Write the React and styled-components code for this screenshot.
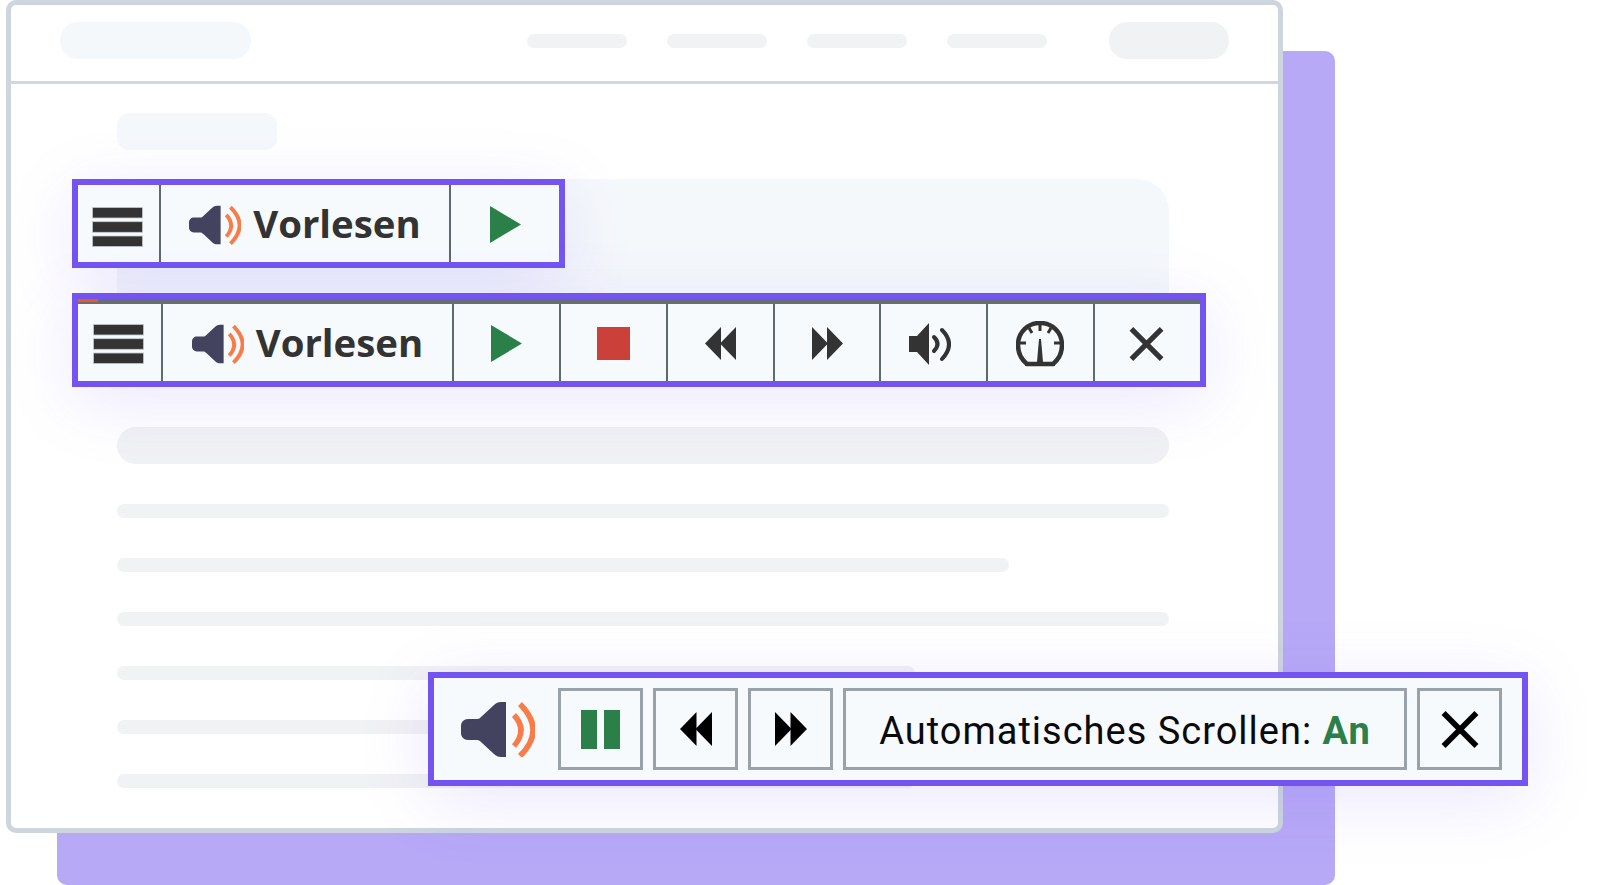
import React from "react";
import styled, { createGlobalStyle } from "styled-components";

const GlobalStyle = createGlobalStyle`
  html, body {
    margin: 0;
    padding: 0;
    background: #fff;
    overflow: hidden;
  }
  * { box-sizing: border-box; }
`;

const DARK = "#333333";
const GREEN = "#2a8048";

const Stage = styled.div`
  position: relative;
  width: 1600px;
  height: 885px;
  padding-left: 6px;
  overflow: hidden;
  background: #fff;
`;

const Backdrop = styled.div`
  position: absolute;
  left: 57px;
  top: 51px;
  width: 1278px;
  height: 834px;
  border-radius: 10px;
  background: #b7a9f6;
`;

const Browser = styled.div`
  position: relative;
  width: 1277px;
  height: 833px;
  border: 5px solid #cdd5df;
  border-radius: 10px;
  background: #fff;
  overflow: hidden;
`;

const Header = styled.header`
  display: flex;
  align-items: center;
  height: 79px;
  padding: 18px 49px 24px;
  border-bottom: 3px solid #d0d7e1;
`;

const Logo = styled.div`
  width: 191px;
  height: 37px;
  border-radius: 18px;
  background: #f5f8fb;
`;

const Nav = styled.nav`
  display: flex;
  gap: 40px;
  margin: 1px 62px 0 auto;
`;

const NavItem = styled.div`
  width: 100px;
  height: 14px;
  border-radius: 7px;
  background: #f1f2f4;
`;

const CTA = styled.div`
  width: 120px;
  height: 37px;
  border-radius: 18px;
  background: #f1f2f4;
`;

const Content = styled.main`
  display: flex;
  flex-direction: column;
  align-items: flex-start;
  padding: 29px 109px 0 106px;
`;

const Tag = styled.div`
  width: 160px;
  height: 37px;
  border-radius: 12px;
  background: #f5f8fb;
`;

const Hero = styled.div`
  width: 100%;
  height: 150px;
  margin-top: 29px;
  border-radius: 32px 32px 0 0;
  background: #f5f8fb;
`;

const Bar = styled.div`
  width: 100%;
  height: 37px;
  margin-top: 98px;
  margin-bottom: 40px;
  border-radius: 19px;
  background: #f1f2f4;
`;

const TextLine = styled.div`
  width: ${(p) => p.$width}px;
  height: 14px;
  margin-bottom: 40px;
  border-radius: 7px;
  background: #f1f2f4;
`;

const Toolbar = styled.div`
  position: absolute;
  left: ${(p) => p.$left}px;
  top: ${(p) => p.$top}px;
  width: ${(p) => p.$width}px;
  height: ${(p) => p.$height}px;
  border: 6px solid #7354f1;
  background: #f7fafd;
  box-shadow: 0 14px 70px rgba(115, 84, 241, 0.14);
`;

const Progress = styled.div`
  height: 5px;
  background: #667074;
`;

const ProgressFill = styled.div`
  width: 20px;
  height: 3px;
  background: #f0581f;
`;

const CellRow = styled.div`
  display: flex;
  height: ${(p) => p.$height}px;
`;

const Cell = styled.div`
  display: flex;
  flex: 0 0 ${(p) => p.$width}px;
  align-items: center;
  justify-content: center;
  gap: 12px;
  padding-top: ${(p) => p.$shift ?? 2}px;
  & + & {
    border-left: 2px solid #5f686c;
  }
`;

const ReadLabel = styled.span`
  font-family: "Open Sans", "Noto Sans", sans-serif;
  font-size: 38.4px;
  font-weight: 700;
  line-height: 1;
  color: ${DARK};
  margin-top: -3px;
`;

const PlayerRow = styled.div`
  display: flex;
  align-items: center;
  height: 100%;
  padding-left: 27px;
  gap: 10px;
`;

const SpeakerSlot = styled.div`
  display: flex;
  flex: 0 0 87px;
`;

const PlayerButton = styled.div`
  display: flex;
  flex: 0 0 ${(p) => p.$width}px;
  align-items: center;
  justify-content: center;
  height: 82px;
  border: 3px solid #98a2a8;
`;

const ScrollLabel = styled.span`
  font-family: Roboto, "Liberation Sans", sans-serif;
  font-size: 38px;
  letter-spacing: 1px;
  line-height: 1;
  padding-top: 3px;
  color: #0a0a0a;
  white-space: nowrap;
`;

const ScrollState = styled.b`
  font-weight: 700;
  color: ${GREEN};
`;

const Icon = styled.svg`
  display: block;
  flex: none;
  margin-right: ${(p) => p.$nudge || 0}px;
`;

const Menu = () => (
  <Icon width="51" height="40" viewBox="0 0 51 40" fill={DARK} stroke="#c8ccd0" strokeWidth="0.8" $nudge={2}>
    <rect x="0.4" y="0.4" width="50.2" height="10.6" />
    <rect x="0.4" y="14.7" width="50.2" height="10.6" />
    <rect x="0.4" y="29" width="50.2" height="10.6" />
  </Icon>
);

const Speaker = ({ width, height }) => (
  <Icon width={width} height={height} viewBox="0 0 74 55">
    <path
      fill="#43425f"
      d="M45 0V55H40C37 55 35 54 33 52L20 40C19 39 18 38 16 38H7C3 38 0 35 0 31V24C0 20 3 17 7 17H16C18 17 19 16 20 15L33 3C35 1 37 0 40 0Z"
    />
    <path fill="none" stroke="#f97b47" strokeWidth="5.5" d="M53 13Q67 28 53 44" />
    <path fill="none" stroke="#f97b47" strokeWidth="5.5" d="M59 2Q85 28 59 54" />
  </Icon>
);

const Play = () => (
  <Icon width="31" height="37" viewBox="0 0 31 37" fill={GREEN}>
    <polygon points="0,0 31,18.5 0,37" />
  </Icon>
);

const Stop = () => (
  <Icon width="33" height="33" viewBox="0 0 33 33">
    <rect width="33" height="33" fill="#cb4038" />
  </Icon>
);

const Rewind = ({ size, fill }) => (
  <Icon width={size} height={size} viewBox="0 0 31 33" fill={fill}>
    <polygon points="0,16.5 16,0 16,33" />
    <polygon points="15,16.5 31,0 31,33" />
  </Icon>
);

const Forward = ({ size, fill }) => (
  <Icon width={size} height={size} viewBox="0 0 31 33" fill={fill}>
    <polygon points="0,0 16,16.5 0,33" />
    <polygon points="15,0 31,16.5 15,33" />
  </Icon>
);

const Volume = () => (
  <Icon width="42" height="42" viewBox="0 0 42 42" $nudge={8}>
    <path fill={DARK} d="M0 13H8L20 0V42L8 29H0Z" />
    <path fill="none" stroke={DARK} strokeWidth="4" strokeLinecap="round" d="M25 14Q32 21 25 28" />
    <path fill="none" stroke={DARK} strokeWidth="4" strokeLinecap="round" d="M33 7Q47 21 33 36" />
  </Icon>
);

const Gauge = () => (
  <Icon width="48" height="46" viewBox="0 0 48 46" $nudge={2}>
    <path
      fill="none"
      stroke={DARK}
      strokeWidth="4.5"
      d="M11 43C5 38 2 31 2 24C2 11 12 2 24 2S46 11 46 24C46 31 43 38 37 43Z"
    />
    <path fill={DARK} d="M23 18H25L27 41H21Z" />
    <path fill={DARK} d="M9 41H39V45H9Z" />
    <path
      stroke={DARK}
      strokeWidth="3"
      d="M24 3V10M13 7L16 12M35 7L32 12M4 22H10M44 22H38"
    />
  </Icon>
);

const Close = ({ width, height, stroke, strokeWidth, nudge }) => (
  <Icon width={width} height={height} viewBox="0 0 36 36" $nudge={nudge}>
    <path fill="none" stroke={stroke} strokeWidth={strokeWidth} d="M2 2L34 34M34 2L2 34" />
  </Icon>
);

const Pause = () => (
  <Icon width="39" height="39" viewBox="0 0 39 39" fill={GREEN}>
    <rect width="16" height="39" />
    <rect x="23" width="16" height="39" />
  </Icon>
);

const VoiceCell = ({ width }) => (
  <Cell $width={width}>
    <Speaker width={52} height={40} />
    <ReadLabel>Vorlesen</ReadLabel>
  </Cell>
);

export default function App() {
  return (
    <>
      <GlobalStyle />
      <Stage>
        <Backdrop />
        <Browser>
          <Header>
            <Logo />
            <Nav>
              <NavItem />
              <NavItem />
              <NavItem />
              <NavItem />
            </Nav>
            <CTA />
          </Header>
          <Content>
            <Tag />
            <Hero />
            <Bar />
            <TextLine $width={1052} />
            <TextLine $width={892} />
            <TextLine $width={1052} />
            <TextLine $width={798} />
            <TextLine $width={798} />
            <TextLine $width={798} />
          </Content>
        </Browser>

        <Toolbar $left={72} $top={179} $width={493} $height={89}>
          <CellRow $height={77}>
            <Cell $width={81} $shift={7}>
              <Menu />
            </Cell>
            <VoiceCell width={290} />
            <Cell $width={110}>
              <Play />
            </Cell>
          </CellRow>
        </Toolbar>

        <Toolbar $left={72} $top={293} $width={1134} $height={94}>
          <Progress>
            <ProgressFill />
          </Progress>
          <CellRow $height={77}>
            <Cell $width={83}>
              <Menu />
            </Cell>
            <VoiceCell width={291} />
            <Cell $width={107}>
              <Play />
            </Cell>
            <Cell $width={107}>
              <Stop />
            </Cell>
            <Cell $width={107}>
              <Rewind size={33} fill={DARK} />
            </Cell>
            <Cell $width={106}>
              <Forward size={33} fill={DARK} />
            </Cell>
            <Cell $width={107}>
              <Volume />
            </Cell>
            <Cell $width={107}>
              <Gauge />
            </Cell>
            <Cell $width={107}>
              <Close width={35} height={34} stroke={DARK} strokeWidth={5.5} nudge={2} />
            </Cell>
          </CellRow>
        </Toolbar>

        <Toolbar $left={428} $top={672} $width={1100} $height={114}>
          <PlayerRow>
            <SpeakerSlot>
              <Speaker width={74} height={55} />
            </SpeakerSlot>
            <PlayerButton $width={85}>
              <Pause />
            </PlayerButton>
            <PlayerButton $width={85}>
              <Rewind size={34} fill="#000" />
            </PlayerButton>
            <PlayerButton $width={85}>
              <Forward size={34} fill="#000" />
            </PlayerButton>
            <PlayerButton $width={564}>
              <ScrollLabel>
                Automatisches Scrollen: <ScrollState>An</ScrollState>
              </ScrollLabel>
            </PlayerButton>
            <PlayerButton $width={85}>
              <Close width={38} height={37} stroke="#000" strokeWidth={5.5} />
            </PlayerButton>
          </PlayerRow>
        </Toolbar>
      </Stage>
    </>
  );
}
